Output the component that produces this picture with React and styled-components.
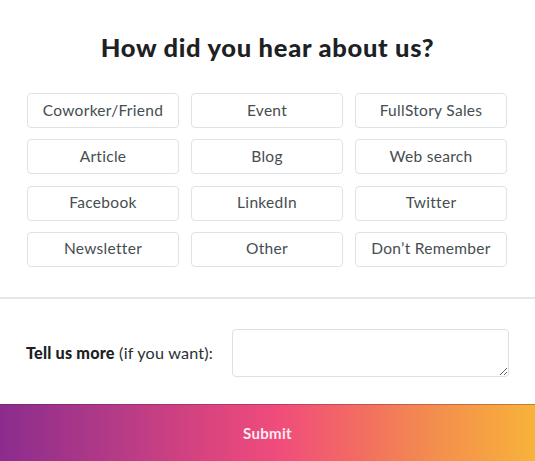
import React from "react";
import styled, { createGlobalStyle } from "styled-components";

const Global = createGlobalStyle`
  html, body { margin: 0; padding: 0; background: #ffffff; }
  * { box-sizing: border-box; }
`;

const Page = styled.div`
  width: 535px;
  height: 461px;
  display: flex;
  flex-direction: column;
  background: #ffffff;
  font-family: "Lato", "Open Sans", sans-serif;
  overflow: hidden;
`;

const Title = styled.h1`
  margin: 0;
  padding-top: 32px;
  font-size: 25.5px;
  line-height: 31px;
  font-weight: 900;
  color: #1d2124;
  text-align: center;
  letter-spacing: 0.7px;
`;

const Grid = styled.div`
  display: grid;
  grid-template-columns: repeat(3, 152px);
  grid-auto-rows: 35px;
  column-gap: 12px;
  row-gap: 11.3px;
  padding: 0 27px;
  margin-top: 30px;
`;

const Option = styled.button`
  display: flex;
  align-items: center;
  justify-content: center;
  background: #ffffff;
  border: 1px solid #dfe3e5;
  border-radius: 4px;
  font-family: inherit;
  font-size: 15.5px;
  letter-spacing: 0.3px;
  color: #464d51;
  padding: 0 0 2px;
  cursor: pointer;
`;

const Divider = styled.hr`
  margin: 30px 0 0;
  border: 0;
  height: 2px;
  background: #e4e6e7;
`;

const FormRow = styled.div`
  display: flex;
  align-items: center;
  justify-content: space-between;
  padding: 30px 26px 27px 26px;
`;

const Label = styled.label`
  font-size: 16.2px;
  color: #2b3033;
  letter-spacing: 0.2px;
`;

const Strong = styled.strong`
  font-weight: 900;
  color: #1d2124;
`;

const TextArea = styled.textarea`
  width: 277px;
  height: 48px;
  border: 1px solid #dde1e3;
  border-radius: 4px;
  background: #ffffff;
  font-family: inherit;
  font-size: 14px;
  padding: 6px 8px;
  margin: 0;
  display: block;
`;

const Submit = styled.button`
  flex: 1;
  border: 0;
  border-top: 1px solid rgba(90, 30, 80, 0.35);
  margin: 0;
  background: linear-gradient(
    90deg,
    #8b2c8e 0%,
    #b53b86 22%,
    #d8437f 38%,
    #f04c7c 52%,
    #f26a63 66%,
    #f38b4f 80%,
    #f8b33a 100%
  );
  color: #fde9f0;
  font-family: inherit;
  font-size: 15px;
  font-weight: 700;
  letter-spacing: 0.3px;
  cursor: pointer;
`;

const options = [
  "Coworker/Friend",
  "Event",
  "FullStory Sales",
  "Article",
  "Blog",
  "Web search",
  "Facebook",
  "LinkedIn",
  "Twitter",
  "Newsletter",
  "Other",
  "Don\u2019t Remember",
];

export default function App() {
  return (
    <Page>
      <Global />
      <Title>How did you hear about us?</Title>
      <Grid>
        {options.map((o) => (
          <Option key={o}>{o}</Option>
        ))}
      </Grid>
      <Divider />
      <FormRow>
        <Label>
          <Strong>Tell us more</Strong> (if you want):
        </Label>
        <TextArea />
      </FormRow>
      <Submit>Submit</Submit>
    </Page>
  );
}
